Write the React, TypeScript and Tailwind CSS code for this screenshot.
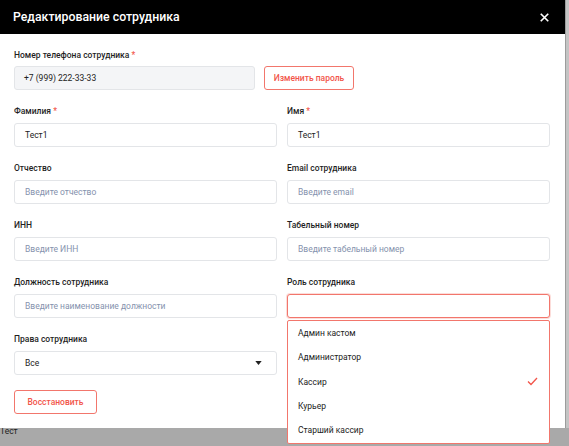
import React from 'react';

const RED = 'text-[#f2554a]';

function Label({ text, required }: { text: string; required?: boolean }) {
  return (
    <div className="h-[10px] text-[8.5px] leading-[10px] font-medium text-[#1f1f1f] whitespace-nowrap">
      {text}
      {required && <span className="text-[#f2554a]"> *</span>}
    </div>
  );
}

function Field({ label, required, value, placeholder }: { label: string; required?: boolean; value?: string; placeholder?: string }) {
  return (
    <div className="flex flex-col gap-[7px]">
      <Label text={label} required={required} />
      <div className="h-[24px] rounded-[3px] border border-[#e3e5e8] bg-white flex items-center px-[10px] text-[8.5px]">
        {value ? <span className="text-[#222]">{value}</span> : <span className="text-[#8592ad]">{placeholder}</span>}
      </div>
    </div>
  );
}

export default function App() {
  const roles = ['Админ кастом', 'Администратор', 'Кассир', 'Курьер', 'Старший кассир'];
  return (
    <div className="relative w-full h-[446px] bg-[#a9a9a9] overflow-hidden" style={{ fontFamily: 'Roboto, "Noto Sans", sans-serif' }}>
      <div className="absolute left-0 top-[425px] text-[8.5px] text-[#222]">Тест</div>
      <div className="absolute right-0 top-0 h-[428px] w-[4px] bg-[#c4c4c4] border-l border-[#9c9c9c]" />

      <div className="absolute left-0 top-0 w-[565px] h-[428px] bg-white">
        <header className="h-[34px] bg-black flex items-center justify-between pl-[13px] pr-[16px]">
          <h1 className="text-[12.3px] font-medium text-white">Редактирование сотрудника</h1>
          <svg width="9" height="9" viewBox="0 0 12 12" className="text-white">
            <path d="M1 1L11 11M11 1L1 11" stroke="currentColor" strokeWidth="2.2" />
          </svg>
        </header>

        <div className="px-[14px] pt-[16px] flex flex-col">
          <div className="flex flex-col gap-[6px]">
            <Label text="Номер телефона сотрудника" required />
            <div className="flex gap-[9px]">
              <div className="w-[241px] h-[24px] rounded-[3px] border border-[#e3e5e8] bg-[#f4f5f7] flex items-center px-[9px] text-[8.5px] text-[#222]">
                +7 (999) 222-33-33
              </div>
              <button className={`w-[90px] h-[24px] rounded-[3px] border border-[#f2766c] bg-white text-[8.5px] font-medium whitespace-nowrap ${RED}`}>
                Изменить пароль
              </button>
            </div>
          </div>

          <div className="grid grid-cols-2 gap-x-[10px] gap-y-[16px] mt-[16px] w-[536px]">
            <Field label="Фамилия" required value="Тест1" />
            <Field label="Имя" required value="Тест1" />
            <Field label="Отчество" placeholder="Введите отчество" />
            <Field label="Email сотрудника" placeholder="Введите email" />
            <Field label="ИНН" placeholder="Введите ИНН" />
            <Field label="Табельный номер" placeholder="Введите табельный номер" />
            <Field label="Должность сотрудника" placeholder="Введите наименование должности" />
            <div className="relative flex flex-col gap-[7px]">
              <Label text="Роль сотрудника" />
              <div className="h-[24px] rounded-[3px] border border-[#f2766c] bg-white shadow-[0_0_0_1px_rgba(242,118,108,0.25)]" />
              <div className="absolute left-0 top-[43px] w-full z-10 rounded-[2px] border border-[#f2766c] bg-white">
                {roles.map((r) => (
                  <div key={r} className="h-[24.4px] flex items-center justify-between pl-[10px] pr-[11px] text-[8.5px] text-[#222]">
                    <span>{r}</span>
                    {r === 'Кассир' && (
                      <svg width="11" height="9" viewBox="0 0 11 9" className="text-[#f2554a]">
                        <path d="M1 4.5L4 7.5L10 1" fill="none" stroke="currentColor" strokeWidth="1.3" />
                      </svg>
                    )}
                  </div>
                ))}
              </div>
            </div>
            <div className="flex flex-col gap-[7px]">
              <Label text="Права сотрудника" />
              <div className="h-[24px] rounded-[3px] border border-[#e3e5e8] bg-white flex items-center justify-between pl-[10px] pr-[14px] text-[8.5px] text-[#222]">
                <span>Все</span>
                <svg width="7" height="4" viewBox="0 0 8 5" className="text-[#222]">
                  <path d="M0 0H8L4 5Z" fill="currentColor" />
                </svg>
              </div>
            </div>
          </div>

          <button className={`mt-[15px] w-[83px] h-[24px] rounded-[3px] border border-[#f2766c] bg-white text-[8.5px] font-medium ${RED}`}>
            Восстановить
          </button>
        </div>
      </div>
    </div>
  );
}
